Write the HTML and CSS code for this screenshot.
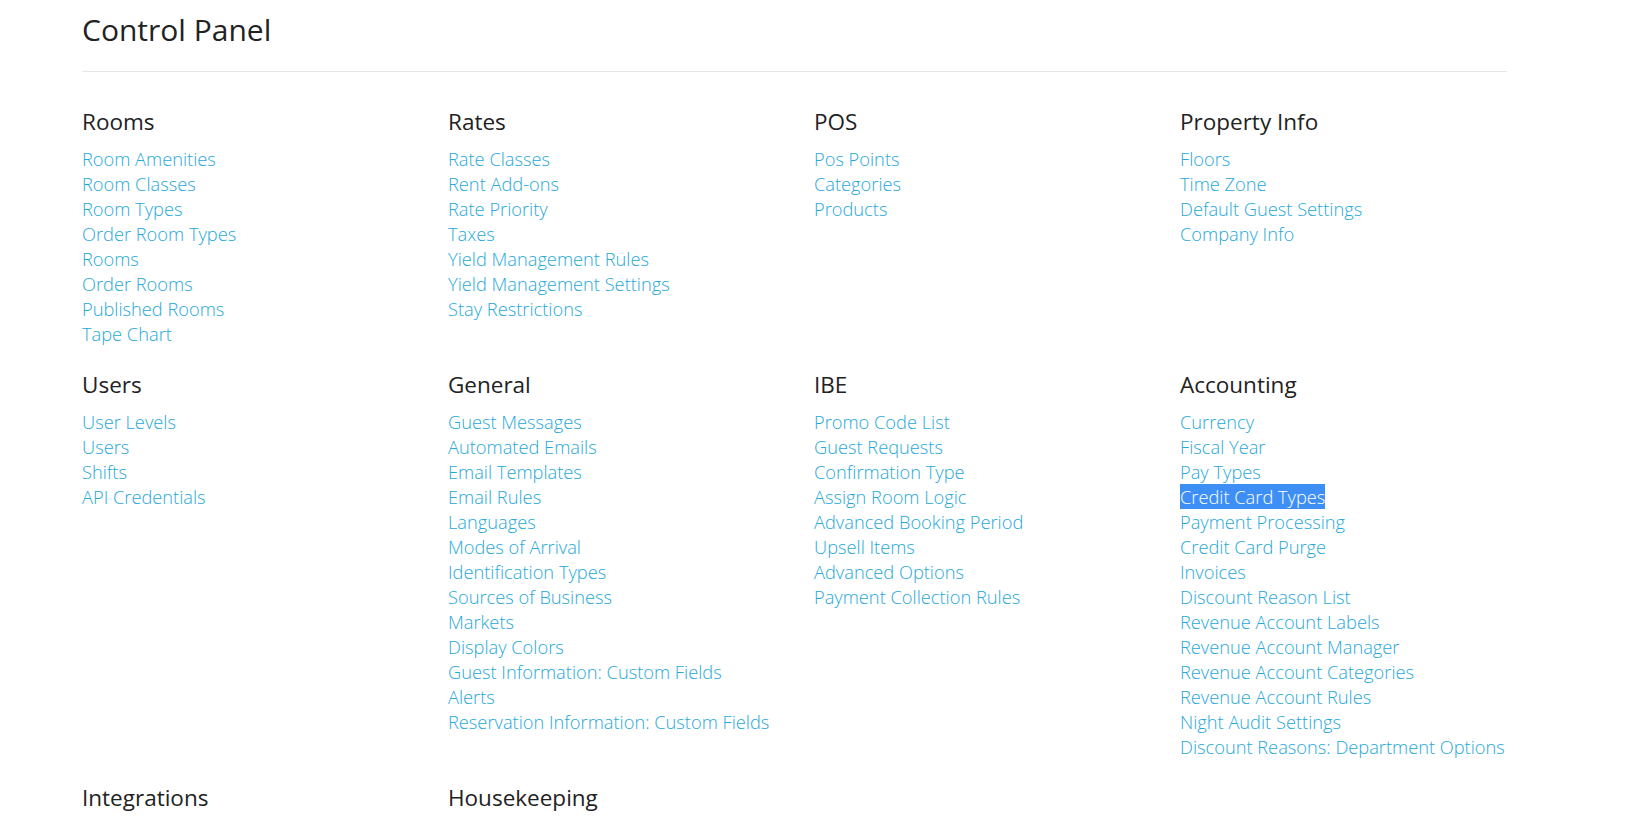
FILE: index.html
```html
<!DOCTYPE html>
<html lang="en">
<head>
<meta charset="utf-8">
<title>Control Panel</title>
<link rel="stylesheet" href="styles.css">
</head>
<body>
<main class="page">
  <h1 class="page-title">Control Panel</h1>
  <hr class="divider">
  <div class="panel-grid">
    <section class="group">
      <h2 class="group-title">Rooms</h2>
      <ul class="links">
        <li><a href="#">Room Amenities</a></li>
        <li><a href="#">Room Classes</a></li>
        <li><a href="#">Room Types</a></li>
        <li><a href="#">Order Room Types</a></li>
        <li><a href="#">Rooms</a></li>
        <li><a href="#">Order Rooms</a></li>
        <li><a href="#">Published Rooms</a></li>
        <li><a href="#">Tape Chart</a></li>
      </ul>
    </section>
    <section class="group">
      <h2 class="group-title">Rates</h2>
      <ul class="links">
        <li><a href="#">Rate Classes</a></li>
        <li><a href="#">Rent Add-ons</a></li>
        <li><a href="#">Rate Priority</a></li>
        <li><a href="#">Taxes</a></li>
        <li><a href="#">Yield Management Rules</a></li>
        <li><a href="#">Yield Management Settings</a></li>
        <li><a href="#">Stay Restrictions</a></li>
      </ul>
    </section>
    <section class="group">
      <h2 class="group-title">POS</h2>
      <ul class="links">
        <li><a href="#">Pos Points</a></li>
        <li><a href="#">Categories</a></li>
        <li><a href="#">Products</a></li>
      </ul>
    </section>
    <section class="group">
      <h2 class="group-title">Property Info</h2>
      <ul class="links">
        <li><a href="#">Floors</a></li>
        <li><a href="#">Time Zone</a></li>
        <li><a href="#">Default Guest Settings</a></li>
        <li><a href="#">Company Info</a></li>
      </ul>
    </section>

    <section class="group">
      <h2 class="group-title">Users</h2>
      <ul class="links">
        <li><a href="#">User Levels</a></li>
        <li><a href="#">Users</a></li>
        <li><a href="#">Shifts</a></li>
        <li><a href="#">API Credentials</a></li>
      </ul>
    </section>
    <section class="group">
      <h2 class="group-title">General</h2>
      <ul class="links">
        <li><a href="#">Guest Messages</a></li>
        <li><a href="#">Automated Emails</a></li>
        <li><a href="#">Email Templates</a></li>
        <li><a href="#">Email Rules</a></li>
        <li><a href="#">Languages</a></li>
        <li><a href="#">Modes of Arrival</a></li>
        <li><a href="#">Identification Types</a></li>
        <li><a href="#">Sources of Business</a></li>
        <li><a href="#">Markets</a></li>
        <li><a href="#">Display Colors</a></li>
        <li><a href="#">Guest Information: Custom Fields</a></li>
        <li><a href="#">Alerts</a></li>
        <li><a href="#">Reservation Information: Custom Fields</a></li>
      </ul>
    </section>
    <section class="group">
      <h2 class="group-title">IBE</h2>
      <ul class="links">
        <li><a href="#">Promo Code List</a></li>
        <li><a href="#">Guest Requests</a></li>
        <li><a href="#">Confirmation Type</a></li>
        <li><a href="#">Assign Room Logic</a></li>
        <li><a href="#">Advanced Booking Period</a></li>
        <li><a href="#">Upsell Items</a></li>
        <li><a href="#">Advanced Options</a></li>
        <li><a href="#">Payment Collection Rules</a></li>
      </ul>
    </section>
    <section class="group">
      <h2 class="group-title">Accounting</h2>
      <ul class="links">
        <li><a href="#">Currency</a></li>
        <li><a href="#">Fiscal Year</a></li>
        <li><a href="#">Pay Types</a></li>
        <li><a href="#" class="selected">Credit Card Types</a></li>
        <li><a href="#">Payment Processing</a></li>
        <li><a href="#">Credit Card Purge</a></li>
        <li><a href="#">Invoices</a></li>
        <li><a href="#">Discount Reason List</a></li>
        <li><a href="#">Revenue Account Labels</a></li>
        <li><a href="#">Revenue Account Manager</a></li>
        <li><a href="#">Revenue Account Categories</a></li>
        <li><a href="#">Revenue Account Rules</a></li>
        <li><a href="#">Night Audit Settings</a></li>
        <li><a href="#">Discount Reasons: Department Options</a></li>
      </ul>
    </section>

    <section class="group">
      <h2 class="group-title">Integrations</h2>
    </section>
    <section class="group">
      <h2 class="group-title">Housekeeping</h2>
    </section>
  </div>
</main>
</body>
</html>
```

FILE: styles.css
```css
html, body {
  margin: 0;
  padding: 0;
  background: #ffffff;
  overflow: hidden;
}

body {
  font-family: "Open Sans", "Liberation Sans", sans-serif;
  font-weight: 300;
  color: #222222;
}

.page {
  width: 1425px;
  padding: 13px 0 0 82px;
}

.page-title {
  margin: 0;
  font-size: 30px;
  line-height: 33px;
  font-weight: 400;
  color: #222222;
}

.divider {
  margin: 25px 0 0 0;
  border: 0;
  border-top: 1px solid #e6e6e6;
  height: 0;
}

.panel-grid {
  display: grid;
  grid-template-columns: repeat(4, minmax(0, 1fr));
  column-gap: 39px;
  row-gap: 25px;
  margin-top: 36px;
  align-items: start;
}

.group-title {
  margin: 0 0 11px 0;
  padding-top: 1px;
  font-size: 22.5px;
  line-height: 26px;
  font-weight: 400;
  color: #222222;
}

.links {
  list-style: none;
  margin: 0;
  padding: 0;
}

.links li {
  font-size: 18.25px;
  line-height: 25px;
}

.links a {
  color: #27a8da;
  text-decoration: none;
  white-space: nowrap;
}

.links a.selected {
  background: #3d8ff6;
  color: #ffffff;
}
```
